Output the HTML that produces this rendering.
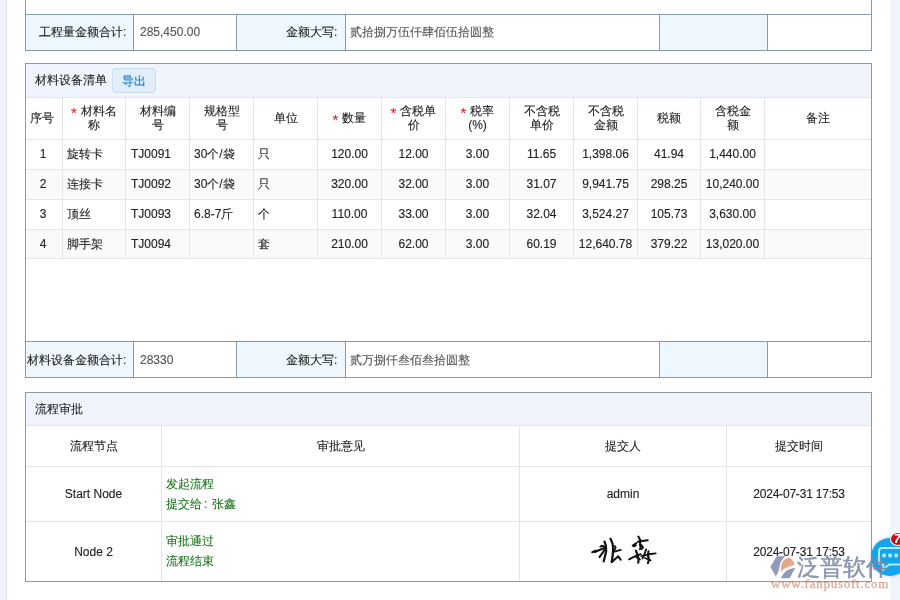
<!DOCTYPE html>
<html><head><meta charset="utf-8">
<style>
*{box-sizing:border-box;margin:0;padding:0}
html,body{width:900px;height:600px;overflow:hidden}
body{background:#f0f4fb;font-family:"Liberation Sans",sans-serif;font-size:12px;color:#222;position:relative}
.page{position:absolute;left:7px;top:0;width:883px;height:600px;background:#fff;box-shadow:-1px 0 1px rgba(0,0,0,0.07)}
.a{position:absolute}
.wrap{position:absolute;left:0;top:0;width:900px;height:600px;will-change:transform}
.t{position:absolute;white-space:nowrap;-webkit-text-stroke:0.12px currentColor}
.cj{-webkit-text-stroke:0.1px currentColor}
.st{color:#d22b2b;margin-right:4px;font-size:15px;position:relative;top:3px;line-height:10px}
.v{color:#555}
.btn{-webkit-text-stroke:0.2px currentColor;position:absolute;left:112px;top:68px;width:44px;height:25px;border:1px solid #c8dcee;background:#e1eefa;border-radius:4px;color:#2b82c9;text-align:center;line-height:25px;font-size:12px}
</style></head><body>
<div class="page"></div>
<div class="wrap">
<div class="a" style="left:25px;top:15px;width:846px;height:35px;background:#fff"></div>
<div class="a" style="left:26px;top:15px;width:107px;height:35px;background:#eef7fd"></div>
<div class="a" style="left:237px;top:15px;width:108px;height:35px;background:#eef7fd"></div>
<div class="a" style="left:660px;top:15px;width:107px;height:35px;background:#eef7fd"></div>
<div class="a" style="left:25px;top:14px;width:847px;height:1px;background:#879ca6"></div>
<div class="a" style="left:25px;top:50px;width:847px;height:1px;background:#879ca6"></div>
<div class="a" style="left:25px;top:0px;width:1px;height:51px;background:#879ca6"></div>
<div class="a" style="left:871px;top:0px;width:1px;height:51px;background:#879ca6"></div>
<div class="a" style="left:133px;top:14px;width:1px;height:37px;background:#879ca6"></div>
<div class="a" style="left:236px;top:14px;width:1px;height:37px;background:#879ca6"></div>
<div class="a" style="left:345px;top:14px;width:1px;height:37px;background:#879ca6"></div>
<div class="a" style="left:659px;top:14px;width:1px;height:37px;background:#879ca6"></div>
<div class="a" style="left:767px;top:14px;width:1px;height:37px;background:#879ca6"></div>
<div class="t cj" style="left:39px;top:25px;line-height:14px">工程量金额合计:</div>
<div class="t v" style="left:140px;top:25px;line-height:14px">285,450.00</div>
<div class="t cj" style="left:286px;top:25px;line-height:14px">金额大写:</div>
<div class="t v cj" style="left:350px;top:25px;line-height:14px">贰拾捌万伍仟肆佰伍拾圆整</div>
<div class="a" style="left:25px;top:63px;width:847px;height:315px;background:#fff"></div>
<div class="a" style="left:26px;top:64px;width:845px;height:33px;background:#f0f5fd"></div>
<div class="a" style="left:25px;top:63px;width:847px;height:1px;background:#879ca6"></div>
<div class="a" style="left:25px;top:377px;width:847px;height:1px;background:#879ca6"></div>
<div class="a" style="left:25px;top:63px;width:1px;height:315px;background:#879ca6"></div>
<div class="a" style="left:871px;top:63px;width:1px;height:315px;background:#879ca6"></div>
<div class="t cj" style="left:35px;top:73.0px;line-height:14px;">材料设备清单</div>
<div class="btn">导出</div>
<div class="a" style="left:26px;top:97px;width:845px;height:1px;background:#e3e5e8"></div>
<div class="a" style="left:26px;top:170px;width:845px;height:29px;background:#fafafa"></div>
<div class="a" style="left:26px;top:230px;width:845px;height:28px;background:#fafafa"></div>
<div class="a" style="left:26px;top:139px;width:845px;height:1px;background:#e3e5e8"></div>
<div class="a" style="left:26px;top:169px;width:845px;height:1px;background:#e3e5e8"></div>
<div class="a" style="left:26px;top:199px;width:845px;height:1px;background:#e3e5e8"></div>
<div class="a" style="left:26px;top:229px;width:845px;height:1px;background:#e3e5e8"></div>
<div class="a" style="left:26px;top:258px;width:845px;height:1px;background:#e3e5e8"></div>
<div class="a" style="left:62px;top:97px;width:1px;height:162px;background:#e3e5e8"></div>
<div class="a" style="left:125px;top:97px;width:1px;height:162px;background:#e3e5e8"></div>
<div class="a" style="left:189px;top:97px;width:1px;height:162px;background:#e3e5e8"></div>
<div class="a" style="left:253px;top:97px;width:1px;height:162px;background:#e3e5e8"></div>
<div class="a" style="left:317px;top:97px;width:1px;height:162px;background:#e3e5e8"></div>
<div class="a" style="left:381px;top:97px;width:1px;height:162px;background:#e3e5e8"></div>
<div class="a" style="left:445px;top:97px;width:1px;height:162px;background:#e3e5e8"></div>
<div class="a" style="left:509px;top:97px;width:1px;height:162px;background:#e3e5e8"></div>
<div class="a" style="left:573px;top:97px;width:1px;height:162px;background:#e3e5e8"></div>
<div class="a" style="left:637px;top:97px;width:1px;height:162px;background:#e3e5e8"></div>
<div class="a" style="left:700px;top:97px;width:1px;height:162px;background:#e3e5e8"></div>
<div class="a" style="left:764px;top:97px;width:1px;height:162px;background:#e3e5e8"></div>
<div class="t cj" style="left:24px;width:36px;top:110.5px;text-align:center;line-height:14px;">序号</div>
<div class="t cj" style="left:63px;width:62px;top:103.5px;text-align:center;line-height:14px;"><span class="st">*</span>材料名<br>称</div>
<div class="t cj" style="left:126px;width:63px;top:103.5px;text-align:center;line-height:14px;">材料编<br>号</div>
<div class="t cj" style="left:190px;width:63px;top:103.5px;text-align:center;line-height:14px;">规格型<br>号</div>
<div class="t cj" style="left:254px;width:63px;top:110.5px;text-align:center;line-height:14px;">单位</div>
<div class="t cj" style="left:318px;width:63px;top:110.5px;text-align:center;line-height:14px;"><span class="st">*</span>数量</div>
<div class="t cj" style="left:382px;width:63px;top:103.5px;text-align:center;line-height:14px;"><span class="st">*</span>含税单<br>价</div>
<div class="t cj" style="left:446px;width:63px;top:103.5px;text-align:center;line-height:14px;"><span class="st">*</span>税率<br>(%)</div>
<div class="t cj" style="left:510px;width:63px;top:103.5px;text-align:center;line-height:14px;">不含税<br>单价</div>
<div class="t cj" style="left:574px;width:63px;top:103.5px;text-align:center;line-height:14px;">不含税<br>金额</div>
<div class="t cj" style="left:638px;width:62px;top:110.5px;text-align:center;line-height:14px;">税额</div>
<div class="t cj" style="left:701px;width:63px;top:103.5px;text-align:center;line-height:14px;">含税金<br>额</div>
<div class="t cj" style="left:765px;width:106px;top:110.5px;text-align:center;line-height:14px;">备注</div>
<div class="t" style="left:25px;width:36px;top:146.5px;text-align:center;line-height:14px;">1</div>
<div class="t cj" style="left:67px;top:146.5px;line-height:14px;">旋转卡</div>
<div class="t" style="left:131px;top:146.5px;line-height:14px;">TJ0091</div>
<div class="t cj" style="left:194px;top:146.5px;line-height:14px;">30个/袋</div>
<div class="t cj" style="left:258px;top:146.5px;line-height:14px;">只</div>
<div class="t" style="left:318px;width:63px;top:146.5px;text-align:center;line-height:14px;">120.00</div>
<div class="t" style="left:382px;width:63px;top:146.5px;text-align:center;line-height:14px;">12.00</div>
<div class="t" style="left:446px;width:63px;top:146.5px;text-align:center;line-height:14px;">3.00</div>
<div class="t" style="left:510px;width:63px;top:146.5px;text-align:center;line-height:14px;">11.65</div>
<div class="t" style="left:574px;width:63px;top:146.5px;text-align:center;line-height:14px;">1,398.06</div>
<div class="t" style="left:638px;width:62px;top:146.5px;text-align:center;line-height:14px;">41.94</div>
<div class="t" style="left:701px;width:63px;top:146.5px;text-align:center;line-height:14px;">1,440.00</div>
<div class="t" style="left:25px;width:36px;top:176.5px;text-align:center;line-height:14px;">2</div>
<div class="t cj" style="left:67px;top:176.5px;line-height:14px;">连接卡</div>
<div class="t" style="left:131px;top:176.5px;line-height:14px;">TJ0092</div>
<div class="t cj" style="left:194px;top:176.5px;line-height:14px;">30个/袋</div>
<div class="t cj" style="left:258px;top:176.5px;line-height:14px;">只</div>
<div class="t" style="left:318px;width:63px;top:176.5px;text-align:center;line-height:14px;">320.00</div>
<div class="t" style="left:382px;width:63px;top:176.5px;text-align:center;line-height:14px;">32.00</div>
<div class="t" style="left:446px;width:63px;top:176.5px;text-align:center;line-height:14px;">3.00</div>
<div class="t" style="left:510px;width:63px;top:176.5px;text-align:center;line-height:14px;">31.07</div>
<div class="t" style="left:574px;width:63px;top:176.5px;text-align:center;line-height:14px;">9,941.75</div>
<div class="t" style="left:638px;width:62px;top:176.5px;text-align:center;line-height:14px;">298.25</div>
<div class="t" style="left:701px;width:63px;top:176.5px;text-align:center;line-height:14px;">10,240.00</div>
<div class="t" style="left:25px;width:36px;top:206.5px;text-align:center;line-height:14px;">3</div>
<div class="t cj" style="left:67px;top:206.5px;line-height:14px;">顶丝</div>
<div class="t" style="left:131px;top:206.5px;line-height:14px;">TJ0093</div>
<div class="t cj" style="left:194px;top:206.5px;line-height:14px;">6.8-7斤</div>
<div class="t cj" style="left:258px;top:206.5px;line-height:14px;">个</div>
<div class="t" style="left:318px;width:63px;top:206.5px;text-align:center;line-height:14px;">110.00</div>
<div class="t" style="left:382px;width:63px;top:206.5px;text-align:center;line-height:14px;">33.00</div>
<div class="t" style="left:446px;width:63px;top:206.5px;text-align:center;line-height:14px;">3.00</div>
<div class="t" style="left:510px;width:63px;top:206.5px;text-align:center;line-height:14px;">32.04</div>
<div class="t" style="left:574px;width:63px;top:206.5px;text-align:center;line-height:14px;">3,524.27</div>
<div class="t" style="left:638px;width:62px;top:206.5px;text-align:center;line-height:14px;">105.73</div>
<div class="t" style="left:701px;width:63px;top:206.5px;text-align:center;line-height:14px;">3,630.00</div>
<div class="t" style="left:25px;width:36px;top:236.5px;text-align:center;line-height:14px;">4</div>
<div class="t cj" style="left:67px;top:236.5px;line-height:14px;">脚手架</div>
<div class="t" style="left:131px;top:236.5px;line-height:14px;">TJ0094</div>
<div class="t cj" style="left:258px;top:236.5px;line-height:14px;">套</div>
<div class="t" style="left:318px;width:63px;top:236.5px;text-align:center;line-height:14px;">210.00</div>
<div class="t" style="left:382px;width:63px;top:236.5px;text-align:center;line-height:14px;">62.00</div>
<div class="t" style="left:446px;width:63px;top:236.5px;text-align:center;line-height:14px;">3.00</div>
<div class="t" style="left:510px;width:63px;top:236.5px;text-align:center;line-height:14px;">60.19</div>
<div class="t" style="left:574px;width:63px;top:236.5px;text-align:center;line-height:14px;">12,640.78</div>
<div class="t" style="left:638px;width:62px;top:236.5px;text-align:center;line-height:14px;">379.22</div>
<div class="t" style="left:701px;width:63px;top:236.5px;text-align:center;line-height:14px;">13,020.00</div>
<div class="a" style="left:26px;top:342px;width:107px;height:35px;background:#eef7fd"></div>
<div class="a" style="left:237px;top:342px;width:108px;height:35px;background:#eef7fd"></div>
<div class="a" style="left:660px;top:342px;width:107px;height:35px;background:#eef7fd"></div>
<div class="a" style="left:25px;top:341px;width:847px;height:1px;background:#879ca6"></div>
<div class="a" style="left:133px;top:341px;width:1px;height:37px;background:#879ca6"></div>
<div class="a" style="left:236px;top:341px;width:1px;height:37px;background:#879ca6"></div>
<div class="a" style="left:345px;top:341px;width:1px;height:37px;background:#879ca6"></div>
<div class="a" style="left:659px;top:341px;width:1px;height:37px;background:#879ca6"></div>
<div class="a" style="left:767px;top:341px;width:1px;height:37px;background:#879ca6"></div>
<div class="t cj" style="left:27px;top:353px;line-height:14px">材料设备金额合计:</div>
<div class="t v" style="left:140px;top:353px;line-height:14px">28330</div>
<div class="t cj" style="left:286px;top:353px;line-height:14px">金额大写:</div>
<div class="t v cj" style="left:350px;top:353px;line-height:14px">贰万捌仟叁佰叁拾圆整</div>
<div class="a" style="left:25px;top:392px;width:847px;height:190px;background:#fff"></div>
<div class="a" style="left:26px;top:393px;width:845px;height:32px;background:#f0f5fd"></div>
<div class="a" style="left:25px;top:392px;width:847px;height:1px;background:#879ca6"></div>
<div class="a" style="left:25px;top:581px;width:847px;height:1px;background:#879ca6"></div>
<div class="a" style="left:25px;top:392px;width:1px;height:190px;background:#879ca6"></div>
<div class="a" style="left:871px;top:392px;width:1px;height:190px;background:#879ca6"></div>
<div class="t cj" style="left:35px;top:401.5px;line-height:14px;">流程审批</div>
<div class="a" style="left:26px;top:425px;width:845px;height:1px;background:#e3e5e8"></div>
<div class="a" style="left:26px;top:466px;width:845px;height:1px;background:#e3e5e8"></div>
<div class="a" style="left:26px;top:521px;width:845px;height:1px;background:#e3e5e8"></div>
<div class="a" style="left:161px;top:425px;width:1px;height:156px;background:#e3e5e8"></div>
<div class="a" style="left:519px;top:425px;width:1px;height:156px;background:#e3e5e8"></div>
<div class="a" style="left:726px;top:425px;width:1px;height:156px;background:#e3e5e8"></div>
<div class="t cj" style="left:26px;width:135px;top:438.5px;text-align:center;line-height:14px;">流程节点</div>
<div class="t cj" style="left:162px;width:357px;top:438.5px;text-align:center;line-height:14px;">审批意见</div>
<div class="t cj" style="left:520px;width:206px;top:438.5px;text-align:center;line-height:14px;">提交人</div>
<div class="t cj" style="left:727px;width:144px;top:438.5px;text-align:center;line-height:14px;">提交时间</div>
<div class="t" style="left:26px;width:135px;top:486.5px;text-align:center;line-height:14px;">Start Node</div>
<div class="t cj" style="left:166px;top:473.5px;line-height:20px;color:#1b741b;">发起流程<br>提交给<span style="margin:0 5px 0 2px">:</span>张鑫</div>
<div class="t" style="left:520px;width:206px;top:486.5px;text-align:center;line-height:14px;">admin</div>
<div class="t" style="left:727px;width:144px;top:486.5px;text-align:center;line-height:14px;letter-spacing:-0.2px">2024-07-31 17:53</div>
<div class="t" style="left:26px;width:135px;top:545.0px;text-align:center;line-height:14px;">Node 2</div>
<div class="t cj" style="left:166px;top:531.0px;line-height:20px;color:#1b741b;">审批通过<br>流程结束</div>
<div class="t" style="left:727px;width:144px;top:545.0px;text-align:center;line-height:14px;letter-spacing:-0.2px">2024-07-31 17:53</div>
<svg class="a" style="left:588px;top:532px" width="36" height="36" viewBox="0 0 600 600" fill="none" stroke="#111" stroke-linecap="round" stroke-linejoin="round">
<path stroke-width="34" d="M72 338 L128 310 L116 334 L170 308 L262 272"/>
<path stroke-width="34" d="M208 242 Q236 220 282 252 Q300 276 262 320 L192 420"/>
<path stroke-width="38" d="M276 160 Q312 240 302 320 Q288 390 262 488"/>
<path stroke-width="38" d="M375 112 Q420 190 420 280 Q416 390 396 500"/>
<path stroke-width="30" d="M442 232 Q478 252 440 300"/>
<path stroke-width="32" d="M412 336 L545 298"/>
<path stroke-width="34" d="M396 500 L505 405 L545 462"/>
</svg>
<svg class="a" style="left:622px;top:532px" width="36" height="36" viewBox="0 0 600 600" fill="none" stroke="#111" stroke-linecap="round" stroke-linejoin="round">
<path stroke-width="34" d="M272 76 L304 132"/>
<path stroke-width="34" d="M266 162 L335 150 L428 138"/>
<path stroke-width="32" d="M240 184 L178 226 L194 240 L232 222"/>
<path stroke-width="34" d="M300 140 Q302 210 310 282"/>
<path stroke-width="34" d="M296 204 Q338 230 350 260 Q332 286 298 286"/>
<path stroke-width="32" d="M118 455 L222 402 L312 370"/>
<path stroke-width="36" d="M232 312 Q262 380 278 455 L270 510"/>
<path stroke-width="32" d="M402 292 Q382 362 342 440"/>
<path stroke-width="32" d="M322 402 L452 372 L560 356"/>
<path stroke-width="34" d="M442 322 Q420 400 452 450 L432 520"/>
<path stroke-width="30" d="M384 434 L475 472"/>
<path stroke-width="28" d="M238 420 L300 458"/>
</svg>
<div class="a" style="left:871px;top:538px;width:38px;height:38px;border-radius:50%;background:#12a4ee;box-shadow:0 0 4px rgba(0,0,0,0.2)"></div>
<svg class="a" style="left:872px;top:544px" width="28" height="30" viewBox="0 0 28 30">
<path d="M10 4 H30 V20.5 H17 L11 26 L11.5 20.5 H10 Q7 20.5 7 17.5 V7 Q7 4 10 4 Z" fill="none" stroke="#a9effc" stroke-width="2" stroke-linejoin="round"/>
<rect x="10.2" y="9.6" width="3.8" height="3.8" rx="1.3" fill="#a9effc"/>
<rect x="16.2" y="9.6" width="3.8" height="3.8" rx="1.3" fill="#a9effc"/>
<rect x="22.2" y="9.6" width="3.8" height="3.8" rx="1.3" fill="#a9effc"/>
</svg>
<div class="a" style="left:890px;top:532px;width:15px;height:14px;border-radius:50%;background:#cc0c10;border:1px solid #fff"></div>
<div class="t" style="left:894px;top:532px;line-height:14px;font-size:12px;font-weight:bold;font-style:italic;color:#fff">7</div>
<svg class="a" style="left:768px;top:554px;opacity:0.95" width="30" height="26" viewBox="0 0 692 600">
<path fill="#8c98b5" d="M200 50 L400 50 Q320 120 285 210 Q265 300 240 410 L180 520 L55 300 Z"/>
<path fill="#e3a386" d="M290 420 Q295 250 340 165 Q400 95 490 80 Q570 120 620 250 Q500 290 400 330 Q330 370 290 420 Z"/>
<path fill="#8c98b5" d="M290 560 Q330 470 420 385 Q520 330 630 320 L500 560 Z"/>
</svg>
<div class="t" style="left:797px;top:552px;font-size:23px;line-height:30px;-webkit-text-stroke:0.5px rgba(125,138,165,0.85);color:rgba(125,138,165,0.85)">泛普软件</div>
<div class="t" style="left:771px;top:576px;font-family:'Liberation Serif',serif;font-size:13px;line-height:16px;letter-spacing:0.75px;-webkit-text-stroke:0.25px rgba(205,135,110,0.7);color:rgba(205,135,110,0.7)">www.fanpusoft.com</div>
</div>
</body></html>
